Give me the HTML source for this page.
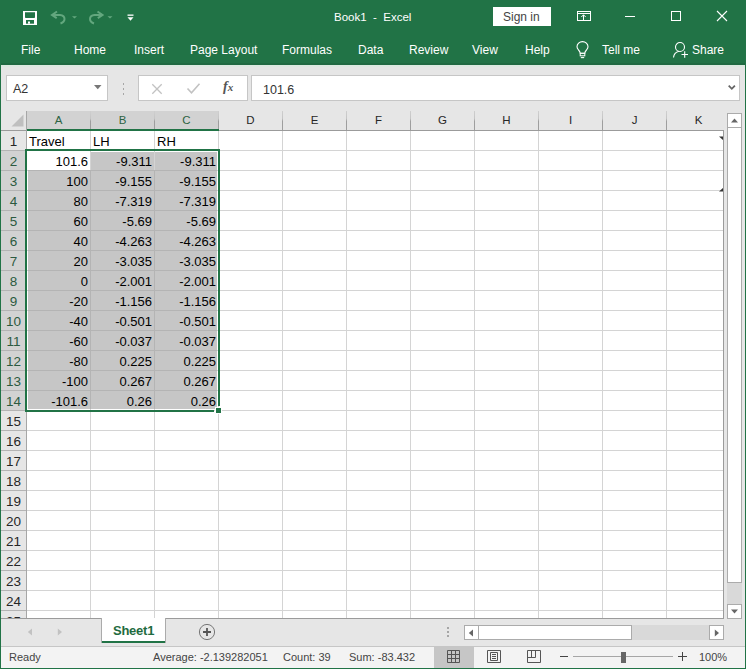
<!DOCTYPE html>
<html><head><meta charset="utf-8">
<style>
*{margin:0;padding:0;box-sizing:border-box}
html,body{width:746px;height:669px;overflow:hidden;background:#e6e6e6;font-family:"Liberation Sans",sans-serif}
.a{position:absolute}
.t{position:absolute;white-space:pre;line-height:1}
.tab{position:absolute;top:44px;color:#fff;font-size:12px;line-height:12px;white-space:pre}
.c{position:absolute;white-space:pre;font-size:13px;line-height:13px;color:#000}
.h{position:absolute;white-space:pre;font-size:12px;line-height:12px;text-align:center}
svg{position:absolute;overflow:visible}
</style></head><body>

<div class="a" style="left:0;top:0;width:746px;height:65px;background:#217346"></div>
<div class="a" style="left:0;top:63px;width:746px;height:2px;background:#1f6a41"></div>
<div class="a" style="left:1px;top:65px;width:744px;height:2px;background:#dbe9e0"></div>
<div class="a" style="left:1px;top:67px;width:744px;height:3px;background:#e3e6e4"></div>
<div class="t" style="left:334px;top:12px;font-size:11.5px;color:#fff">Book1  -  Excel</div>
<div class="a" style="left:493px;top:7px;width:58px;height:19px;background:#fff"></div>
<div class="t" style="left:503px;top:11px;font-size:12px;color:#444">Sign in</div>
<svg style="left:23px;top:11px" width="14" height="14" viewBox="0 0 14 14"><rect x="0" y="0" width="14" height="14" fill="#fff"/><path d="M2 1.3H12V6.2Q12 7 11.2 7H2.8Q2 7 2 6.2Z" fill="#217346"/><rect x="3" y="9" width="8" height="3.7" fill="#217346"/><rect x="5" y="10.5" width="2" height="2.2" fill="#fff"/></svg>
<svg style="left:50px;top:10px" width="28" height="15" viewBox="0 0 28 15"><path d="M7 1.5L2 5L6.7 8.2M2 5H10Q14.5 5.5 14.5 9Q14.5 12 10.5 13.5" fill="none" stroke="#63a77e" stroke-width="2"/><path d="M22 6.3H27L24.5 8.5Z" fill="#63a77e"/></svg>
<svg style="left:87px;top:10px" width="28" height="15" viewBox="0 0 28 15"><path d="M10.5 1.5L15.5 5L10.8 8.2M15.5 5H7.5Q3 5.5 3 9Q3 12 7 13.5" fill="none" stroke="#63a77e" stroke-width="2"/><path d="M20.5 6.3H25.5L23 8.5Z" fill="#63a77e"/></svg>
<svg style="left:127px;top:14px" width="7" height="8" viewBox="0 0 7 8"><rect x="0.5" y="0.5" width="6" height="1.3" fill="#fff"/><path d="M0.5 3.3H6.5L3.5 6.8Z" fill="#fff"/></svg>
<svg style="left:577px;top:11px" width="14" height="11" viewBox="0 0 14 11"><rect x="0.5" y="0.5" width="13" height="9" fill="none" stroke="#fff" stroke-width="1"/><path d="M1 2.5H13" stroke="#fff" stroke-width="1"/><path d="M6.5 9.5V3.8M4.3 6L6.5 3.8L8.7 6" fill="none" stroke="#fff" stroke-width="1"/></svg>
<div class="a" style="left:625px;top:16px;width:10px;height:1px;background:#fff"></div>
<div class="a" style="left:671px;top:11px;width:10px;height:10px;border:1px solid #fff"></div>
<svg style="left:717px;top:11px" width="10" height="10" viewBox="0 0 10 10"><path d="M0 0L10 10M10 0L0 10" stroke="#fff" stroke-width="1.1"/></svg>
<svg style="left:576px;top:42px" width="13" height="17" viewBox="0 0 13 17"><path d="M4.3 11.3Q4 9.5 2.5 8Q1 6.3 1 4.8A5.5 5.2 0 0 1 12 4.8Q12 6.3 10.5 8Q9 9.5 8.7 11.3Z" fill="none" stroke="#fff" stroke-width="1.1"/><rect x="4.2" y="11.3" width="4.6" height="2.5" fill="none" stroke="#fff" stroke-width="1"/><path d="M4.8 15.6H8.2" stroke="#fff" stroke-width="1.1"/></svg>
<svg style="left:672px;top:41px" width="18" height="18" viewBox="0 0 18 18"><circle cx="8" cy="6" r="4.5" fill="none" stroke="#fff" stroke-width="1.1"/><path d="M1.5 16.5Q2 11.5 7 10.3" fill="none" stroke="#fff" stroke-width="1.1"/><path d="M9.5 13.5H16M12.7 10.3V16.8" stroke="#fff" stroke-width="1.1"/></svg>
<div class="tab" style="left:21px">File</div>
<div class="tab" style="left:74px">Home</div>
<div class="tab" style="left:134px">Insert</div>
<div class="tab" style="left:190px">Page Layout</div>
<div class="tab" style="left:282px">Formulas</div>
<div class="tab" style="left:358px">Data</div>
<div class="tab" style="left:409px">Review</div>
<div class="tab" style="left:472px">View</div>
<div class="tab" style="left:525px">Help</div>
<div class="tab" style="left:602px">Tell me</div>
<div class="tab" style="left:692px">Share</div>
<div class="a" style="left:6px;top:75px;width:102px;height:26px;background:#fff;border:1px solid #c6c6c6"></div>
<div class="t" style="left:13px;top:83px;font-size:12.5px;color:#333">A2</div>
<div class="a" style="left:138px;top:75px;width:110px;height:26px;background:#fff;border:1px solid #c6c6c6"></div>
<div class="a" style="left:251px;top:75px;width:489px;height:26px;background:#fff;border:1px solid #c6c6c6"></div>
<div class="t" style="left:263px;top:84px;font-size:12.5px;color:#333">101.6</div>
<svg style="left:94px;top:85px" width="8" height="5" viewBox="0 0 8 5"><path d="M0 0H7.5L3.75 4.2Z" fill="#777"/></svg>
<div class="a" style="left:123px;top:83px;width:1px;height:2px;background:#a6a6a6"></div>
<div class="a" style="left:123px;top:88px;width:1px;height:2px;background:#a6a6a6"></div>
<div class="a" style="left:123px;top:93px;width:1px;height:2px;background:#a6a6a6"></div>
<svg style="left:152px;top:84px" width="10" height="10" viewBox="0 0 10 10"><path d="M0.3 0.3L9.7 9.7M9.7 0.3L0.3 9.7" stroke="#c2c2c2" stroke-width="1.3"/></svg>
<svg style="left:187px;top:83px" width="13" height="11" viewBox="0 0 13 11"><path d="M0.5 5.5L4.5 9.8L12.5 0.7" fill="none" stroke="#c2c2c2" stroke-width="1.6"/></svg>
<div class="t" style="left:223px;top:80px;font-family:'Liberation Serif',serif;font-style:italic;font-weight:bold;font-size:14px;color:#555">f<span style="font-size:11px">x</span></div>
<svg style="left:728px;top:85px" width="8" height="6" viewBox="0 0 8 6"><path d="M0.7 0.7L3.8 3.8L6.9 0.7" fill="none" stroke="#666" stroke-width="1.8"/></svg>
<div class="a" style="left:27px;top:131px;width:697px;height:487px;background:#fff"></div>
<div class="a" style="left:1px;top:111px;width:26px;height:20px;background:#e6e6e6"></div>
<div class="a" style="left:27px;top:111px;width:64px;height:19px;background:#d2d2d2"></div>
<div class="h" style="left:27px;top:115px;width:63px;font-size:11.5px;line-height:11.5px;color:#2c6343">A</div>
<div class="a" style="left:90px;top:111px;width:1px;height:19px;background:linear-gradient(#cfcfcf,#c4c4c4 40%,#9e9e9e 55%,#9e9e9e)"></div>
<div class="a" style="left:91px;top:111px;width:64px;height:19px;background:#d2d2d2"></div>
<div class="h" style="left:91px;top:115px;width:63px;font-size:11.5px;line-height:11.5px;color:#2c6343">B</div>
<div class="a" style="left:154px;top:111px;width:1px;height:19px;background:linear-gradient(#cfcfcf,#c4c4c4 40%,#9e9e9e 55%,#9e9e9e)"></div>
<div class="a" style="left:155px;top:111px;width:64px;height:19px;background:#d2d2d2"></div>
<div class="h" style="left:155px;top:115px;width:63px;font-size:11.5px;line-height:11.5px;color:#2c6343">C</div>
<div class="a" style="left:218px;top:111px;width:1px;height:19px;background:linear-gradient(#cfcfcf,#c4c4c4 40%,#9e9e9e 55%,#9e9e9e)"></div>
<div class="a" style="left:219px;top:111px;width:64px;height:19px;background:#e6e6e6"></div>
<div class="h" style="left:219px;top:115px;width:63px;font-size:11.5px;line-height:11.5px;color:#262626">D</div>
<div class="a" style="left:282px;top:111px;width:1px;height:19px;background:linear-gradient(#cfcfcf,#c4c4c4 40%,#9e9e9e 55%,#9e9e9e)"></div>
<div class="a" style="left:283px;top:111px;width:64px;height:19px;background:#e6e6e6"></div>
<div class="h" style="left:283px;top:115px;width:63px;font-size:11.5px;line-height:11.5px;color:#262626">E</div>
<div class="a" style="left:346px;top:111px;width:1px;height:19px;background:linear-gradient(#cfcfcf,#c4c4c4 40%,#9e9e9e 55%,#9e9e9e)"></div>
<div class="a" style="left:347px;top:111px;width:64px;height:19px;background:#e6e6e6"></div>
<div class="h" style="left:347px;top:115px;width:63px;font-size:11.5px;line-height:11.5px;color:#262626">F</div>
<div class="a" style="left:410px;top:111px;width:1px;height:19px;background:linear-gradient(#cfcfcf,#c4c4c4 40%,#9e9e9e 55%,#9e9e9e)"></div>
<div class="a" style="left:411px;top:111px;width:64px;height:19px;background:#e6e6e6"></div>
<div class="h" style="left:411px;top:115px;width:63px;font-size:11.5px;line-height:11.5px;color:#262626">G</div>
<div class="a" style="left:474px;top:111px;width:1px;height:19px;background:linear-gradient(#cfcfcf,#c4c4c4 40%,#9e9e9e 55%,#9e9e9e)"></div>
<div class="a" style="left:475px;top:111px;width:64px;height:19px;background:#e6e6e6"></div>
<div class="h" style="left:475px;top:115px;width:63px;font-size:11.5px;line-height:11.5px;color:#262626">H</div>
<div class="a" style="left:538px;top:111px;width:1px;height:19px;background:linear-gradient(#cfcfcf,#c4c4c4 40%,#9e9e9e 55%,#9e9e9e)"></div>
<div class="a" style="left:539px;top:111px;width:64px;height:19px;background:#e6e6e6"></div>
<div class="h" style="left:539px;top:115px;width:63px;font-size:11.5px;line-height:11.5px;color:#262626">I</div>
<div class="a" style="left:602px;top:111px;width:1px;height:19px;background:linear-gradient(#cfcfcf,#c4c4c4 40%,#9e9e9e 55%,#9e9e9e)"></div>
<div class="a" style="left:603px;top:111px;width:64px;height:19px;background:#e6e6e6"></div>
<div class="h" style="left:603px;top:115px;width:63px;font-size:11.5px;line-height:11.5px;color:#262626">J</div>
<div class="a" style="left:666px;top:111px;width:1px;height:19px;background:linear-gradient(#cfcfcf,#c4c4c4 40%,#9e9e9e 55%,#9e9e9e)"></div>
<div class="a" style="left:667px;top:111px;width:58px;height:19px;background:#e6e6e6"></div>
<div class="h" style="left:667px;top:115px;width:63px;font-size:11.5px;line-height:11.5px;color:#262626">K</div>
<div class="a" style="left:1px;top:130px;width:723px;height:1px;background:#9b9b9b"></div>
<div class="a" style="left:27px;top:129px;width:192px;height:2px;background:#217346"></div>
<div class="a" style="left:1px;top:131px;width:25px;height:19px;background:#e6e6e6"></div>
<div class="h" style="left:1px;top:135px;width:25px;font-size:13.5px;line-height:13.5px;color:#262626">1</div>
<div class="a" style="left:1px;top:150px;width:25px;height:1px;background:#b4b4b4"></div>
<div class="a" style="left:1px;top:151px;width:25px;height:19px;background:#d2d2d2"></div>
<div class="h" style="left:1px;top:155px;width:25px;font-size:13.5px;line-height:13.5px;color:#2c5a40">2</div>
<div class="a" style="left:1px;top:170px;width:25px;height:1px;background:#b4b4b4"></div>
<div class="a" style="left:1px;top:171px;width:25px;height:19px;background:#d2d2d2"></div>
<div class="h" style="left:1px;top:175px;width:25px;font-size:13.5px;line-height:13.5px;color:#2c5a40">3</div>
<div class="a" style="left:1px;top:190px;width:25px;height:1px;background:#b4b4b4"></div>
<div class="a" style="left:1px;top:191px;width:25px;height:19px;background:#d2d2d2"></div>
<div class="h" style="left:1px;top:195px;width:25px;font-size:13.5px;line-height:13.5px;color:#2c5a40">4</div>
<div class="a" style="left:1px;top:210px;width:25px;height:1px;background:#b4b4b4"></div>
<div class="a" style="left:1px;top:211px;width:25px;height:19px;background:#d2d2d2"></div>
<div class="h" style="left:1px;top:215px;width:25px;font-size:13.5px;line-height:13.5px;color:#2c5a40">5</div>
<div class="a" style="left:1px;top:230px;width:25px;height:1px;background:#b4b4b4"></div>
<div class="a" style="left:1px;top:231px;width:25px;height:19px;background:#d2d2d2"></div>
<div class="h" style="left:1px;top:235px;width:25px;font-size:13.5px;line-height:13.5px;color:#2c5a40">6</div>
<div class="a" style="left:1px;top:250px;width:25px;height:1px;background:#b4b4b4"></div>
<div class="a" style="left:1px;top:251px;width:25px;height:19px;background:#d2d2d2"></div>
<div class="h" style="left:1px;top:255px;width:25px;font-size:13.5px;line-height:13.5px;color:#2c5a40">7</div>
<div class="a" style="left:1px;top:270px;width:25px;height:1px;background:#b4b4b4"></div>
<div class="a" style="left:1px;top:271px;width:25px;height:19px;background:#d2d2d2"></div>
<div class="h" style="left:1px;top:275px;width:25px;font-size:13.5px;line-height:13.5px;color:#2c5a40">8</div>
<div class="a" style="left:1px;top:290px;width:25px;height:1px;background:#b4b4b4"></div>
<div class="a" style="left:1px;top:291px;width:25px;height:19px;background:#d2d2d2"></div>
<div class="h" style="left:1px;top:295px;width:25px;font-size:13.5px;line-height:13.5px;color:#2c5a40">9</div>
<div class="a" style="left:1px;top:310px;width:25px;height:1px;background:#b4b4b4"></div>
<div class="a" style="left:1px;top:311px;width:25px;height:19px;background:#d2d2d2"></div>
<div class="h" style="left:1px;top:315px;width:25px;font-size:13.5px;line-height:13.5px;color:#2c5a40">10</div>
<div class="a" style="left:1px;top:330px;width:25px;height:1px;background:#b4b4b4"></div>
<div class="a" style="left:1px;top:331px;width:25px;height:19px;background:#d2d2d2"></div>
<div class="h" style="left:1px;top:335px;width:25px;font-size:13.5px;line-height:13.5px;color:#2c5a40">11</div>
<div class="a" style="left:1px;top:350px;width:25px;height:1px;background:#b4b4b4"></div>
<div class="a" style="left:1px;top:351px;width:25px;height:19px;background:#d2d2d2"></div>
<div class="h" style="left:1px;top:355px;width:25px;font-size:13.5px;line-height:13.5px;color:#2c5a40">12</div>
<div class="a" style="left:1px;top:370px;width:25px;height:1px;background:#b4b4b4"></div>
<div class="a" style="left:1px;top:371px;width:25px;height:19px;background:#d2d2d2"></div>
<div class="h" style="left:1px;top:375px;width:25px;font-size:13.5px;line-height:13.5px;color:#2c5a40">13</div>
<div class="a" style="left:1px;top:390px;width:25px;height:1px;background:#b4b4b4"></div>
<div class="a" style="left:1px;top:391px;width:25px;height:19px;background:#d2d2d2"></div>
<div class="h" style="left:1px;top:395px;width:25px;font-size:13.5px;line-height:13.5px;color:#2c5a40">14</div>
<div class="a" style="left:1px;top:410px;width:25px;height:1px;background:#b4b4b4"></div>
<div class="a" style="left:1px;top:411px;width:25px;height:19px;background:#e6e6e6"></div>
<div class="h" style="left:1px;top:415px;width:25px;font-size:13.5px;line-height:13.5px;color:#262626">15</div>
<div class="a" style="left:1px;top:430px;width:25px;height:1px;background:#b4b4b4"></div>
<div class="a" style="left:1px;top:431px;width:25px;height:19px;background:#e6e6e6"></div>
<div class="h" style="left:1px;top:435px;width:25px;font-size:13.5px;line-height:13.5px;color:#262626">16</div>
<div class="a" style="left:1px;top:450px;width:25px;height:1px;background:#b4b4b4"></div>
<div class="a" style="left:1px;top:451px;width:25px;height:19px;background:#e6e6e6"></div>
<div class="h" style="left:1px;top:455px;width:25px;font-size:13.5px;line-height:13.5px;color:#262626">17</div>
<div class="a" style="left:1px;top:470px;width:25px;height:1px;background:#b4b4b4"></div>
<div class="a" style="left:1px;top:471px;width:25px;height:19px;background:#e6e6e6"></div>
<div class="h" style="left:1px;top:475px;width:25px;font-size:13.5px;line-height:13.5px;color:#262626">18</div>
<div class="a" style="left:1px;top:490px;width:25px;height:1px;background:#b4b4b4"></div>
<div class="a" style="left:1px;top:491px;width:25px;height:19px;background:#e6e6e6"></div>
<div class="h" style="left:1px;top:495px;width:25px;font-size:13.5px;line-height:13.5px;color:#262626">19</div>
<div class="a" style="left:1px;top:510px;width:25px;height:1px;background:#b4b4b4"></div>
<div class="a" style="left:1px;top:511px;width:25px;height:19px;background:#e6e6e6"></div>
<div class="h" style="left:1px;top:515px;width:25px;font-size:13.5px;line-height:13.5px;color:#262626">20</div>
<div class="a" style="left:1px;top:530px;width:25px;height:1px;background:#b4b4b4"></div>
<div class="a" style="left:1px;top:531px;width:25px;height:19px;background:#e6e6e6"></div>
<div class="h" style="left:1px;top:535px;width:25px;font-size:13.5px;line-height:13.5px;color:#262626">21</div>
<div class="a" style="left:1px;top:550px;width:25px;height:1px;background:#b4b4b4"></div>
<div class="a" style="left:1px;top:551px;width:25px;height:19px;background:#e6e6e6"></div>
<div class="h" style="left:1px;top:555px;width:25px;font-size:13.5px;line-height:13.5px;color:#262626">22</div>
<div class="a" style="left:1px;top:570px;width:25px;height:1px;background:#b4b4b4"></div>
<div class="a" style="left:1px;top:571px;width:25px;height:19px;background:#e6e6e6"></div>
<div class="h" style="left:1px;top:575px;width:25px;font-size:13.5px;line-height:13.5px;color:#262626">23</div>
<div class="a" style="left:1px;top:590px;width:25px;height:1px;background:#b4b4b4"></div>
<div class="a" style="left:1px;top:591px;width:25px;height:19px;background:#e6e6e6"></div>
<div class="h" style="left:1px;top:595px;width:25px;font-size:13.5px;line-height:13.5px;color:#262626">24</div>
<div class="a" style="left:1px;top:610px;width:25px;height:1px;background:#b4b4b4"></div>
<div class="a" style="left:1px;top:611px;width:25px;height:7px;background:#e6e6e6"></div>
<div class="a" style="left:1px;top:611px;width:25px;height:7px;overflow:hidden"><div class="h" style="left:0;top:4px;width:25px;font-size:13.5px;line-height:13.5px;color:#262626">25</div></div>
<div class="a" style="left:1px;top:630px;width:25px;height:1px;background:#b4b4b4"></div>
<div class="a" style="left:26px;top:111px;width:1px;height:507px;background:#a6a6a6"></div>
<div class="a" style="left:28px;top:152px;width:189px;height:257px;background:#c6c6c6"></div>
<div class="a" style="left:27px;top:151px;width:63px;height:19px;background:#fff"></div>
<div class="a" style="left:27px;top:150px;width:697px;height:1px;background:#d4d4d4"></div>
<div class="a" style="left:27px;top:170px;width:697px;height:1px;background:#d4d4d4"></div>
<div class="a" style="left:27px;top:190px;width:697px;height:1px;background:#d4d4d4"></div>
<div class="a" style="left:27px;top:210px;width:697px;height:1px;background:#d4d4d4"></div>
<div class="a" style="left:27px;top:230px;width:697px;height:1px;background:#d4d4d4"></div>
<div class="a" style="left:27px;top:250px;width:697px;height:1px;background:#d4d4d4"></div>
<div class="a" style="left:27px;top:270px;width:697px;height:1px;background:#d4d4d4"></div>
<div class="a" style="left:27px;top:290px;width:697px;height:1px;background:#d4d4d4"></div>
<div class="a" style="left:27px;top:310px;width:697px;height:1px;background:#d4d4d4"></div>
<div class="a" style="left:27px;top:330px;width:697px;height:1px;background:#d4d4d4"></div>
<div class="a" style="left:27px;top:350px;width:697px;height:1px;background:#d4d4d4"></div>
<div class="a" style="left:27px;top:370px;width:697px;height:1px;background:#d4d4d4"></div>
<div class="a" style="left:27px;top:390px;width:697px;height:1px;background:#d4d4d4"></div>
<div class="a" style="left:27px;top:410px;width:697px;height:1px;background:#d4d4d4"></div>
<div class="a" style="left:27px;top:430px;width:697px;height:1px;background:#d4d4d4"></div>
<div class="a" style="left:27px;top:450px;width:697px;height:1px;background:#d4d4d4"></div>
<div class="a" style="left:27px;top:470px;width:697px;height:1px;background:#d4d4d4"></div>
<div class="a" style="left:27px;top:490px;width:697px;height:1px;background:#d4d4d4"></div>
<div class="a" style="left:27px;top:510px;width:697px;height:1px;background:#d4d4d4"></div>
<div class="a" style="left:27px;top:530px;width:697px;height:1px;background:#d4d4d4"></div>
<div class="a" style="left:27px;top:550px;width:697px;height:1px;background:#d4d4d4"></div>
<div class="a" style="left:27px;top:570px;width:697px;height:1px;background:#d4d4d4"></div>
<div class="a" style="left:27px;top:590px;width:697px;height:1px;background:#d4d4d4"></div>
<div class="a" style="left:27px;top:610px;width:697px;height:1px;background:#d4d4d4"></div>
<div class="a" style="left:90px;top:131px;width:1px;height:487px;background:#d4d4d4"></div>
<div class="a" style="left:154px;top:131px;width:1px;height:487px;background:#d4d4d4"></div>
<div class="a" style="left:218px;top:131px;width:1px;height:487px;background:#d4d4d4"></div>
<div class="a" style="left:282px;top:131px;width:1px;height:487px;background:#d4d4d4"></div>
<div class="a" style="left:346px;top:131px;width:1px;height:487px;background:#d4d4d4"></div>
<div class="a" style="left:410px;top:131px;width:1px;height:487px;background:#d4d4d4"></div>
<div class="a" style="left:474px;top:131px;width:1px;height:487px;background:#d4d4d4"></div>
<div class="a" style="left:538px;top:131px;width:1px;height:487px;background:#d4d4d4"></div>
<div class="a" style="left:602px;top:131px;width:1px;height:487px;background:#d4d4d4"></div>
<div class="a" style="left:666px;top:131px;width:1px;height:487px;background:#d4d4d4"></div>
<div class="a" style="left:28px;top:170px;width:189px;height:1px;background:#b4b4b4"></div>
<div class="a" style="left:28px;top:190px;width:189px;height:1px;background:#b4b4b4"></div>
<div class="a" style="left:28px;top:210px;width:189px;height:1px;background:#b4b4b4"></div>
<div class="a" style="left:28px;top:230px;width:189px;height:1px;background:#b4b4b4"></div>
<div class="a" style="left:28px;top:250px;width:189px;height:1px;background:#b4b4b4"></div>
<div class="a" style="left:28px;top:270px;width:189px;height:1px;background:#b4b4b4"></div>
<div class="a" style="left:28px;top:290px;width:189px;height:1px;background:#b4b4b4"></div>
<div class="a" style="left:28px;top:310px;width:189px;height:1px;background:#b4b4b4"></div>
<div class="a" style="left:28px;top:330px;width:189px;height:1px;background:#b4b4b4"></div>
<div class="a" style="left:28px;top:350px;width:189px;height:1px;background:#b4b4b4"></div>
<div class="a" style="left:28px;top:370px;width:189px;height:1px;background:#b4b4b4"></div>
<div class="a" style="left:28px;top:390px;width:189px;height:1px;background:#b4b4b4"></div>
<div class="a" style="left:90px;top:170px;width:1px;height:239px;background:#b4b4b4"></div>
<div class="a" style="left:154px;top:170px;width:1px;height:239px;background:#b4b4b4"></div>
<div class="c" style="left:29px;top:135px">Travel</div>
<div class="c" style="left:93px;top:135px">LH</div>
<div class="c" style="left:157px;top:135px">RH</div>
<div class="c" style="left:26px;top:155px;width:62px;text-align:right">101.6</div>
<div class="c" style="left:90px;top:155px;width:62px;text-align:right">-9.311</div>
<div class="c" style="left:154px;top:155px;width:62px;text-align:right">-9.311</div>
<div class="c" style="left:26px;top:175px;width:62px;text-align:right">100</div>
<div class="c" style="left:90px;top:175px;width:62px;text-align:right">-9.155</div>
<div class="c" style="left:154px;top:175px;width:62px;text-align:right">-9.155</div>
<div class="c" style="left:26px;top:195px;width:62px;text-align:right">80</div>
<div class="c" style="left:90px;top:195px;width:62px;text-align:right">-7.319</div>
<div class="c" style="left:154px;top:195px;width:62px;text-align:right">-7.319</div>
<div class="c" style="left:26px;top:215px;width:62px;text-align:right">60</div>
<div class="c" style="left:90px;top:215px;width:62px;text-align:right">-5.69</div>
<div class="c" style="left:154px;top:215px;width:62px;text-align:right">-5.69</div>
<div class="c" style="left:26px;top:235px;width:62px;text-align:right">40</div>
<div class="c" style="left:90px;top:235px;width:62px;text-align:right">-4.263</div>
<div class="c" style="left:154px;top:235px;width:62px;text-align:right">-4.263</div>
<div class="c" style="left:26px;top:255px;width:62px;text-align:right">20</div>
<div class="c" style="left:90px;top:255px;width:62px;text-align:right">-3.035</div>
<div class="c" style="left:154px;top:255px;width:62px;text-align:right">-3.035</div>
<div class="c" style="left:26px;top:275px;width:62px;text-align:right">0</div>
<div class="c" style="left:90px;top:275px;width:62px;text-align:right">-2.001</div>
<div class="c" style="left:154px;top:275px;width:62px;text-align:right">-2.001</div>
<div class="c" style="left:26px;top:295px;width:62px;text-align:right">-20</div>
<div class="c" style="left:90px;top:295px;width:62px;text-align:right">-1.156</div>
<div class="c" style="left:154px;top:295px;width:62px;text-align:right">-1.156</div>
<div class="c" style="left:26px;top:315px;width:62px;text-align:right">-40</div>
<div class="c" style="left:90px;top:315px;width:62px;text-align:right">-0.501</div>
<div class="c" style="left:154px;top:315px;width:62px;text-align:right">-0.501</div>
<div class="c" style="left:26px;top:335px;width:62px;text-align:right">-60</div>
<div class="c" style="left:90px;top:335px;width:62px;text-align:right">-0.037</div>
<div class="c" style="left:154px;top:335px;width:62px;text-align:right">-0.037</div>
<div class="c" style="left:26px;top:355px;width:62px;text-align:right">-80</div>
<div class="c" style="left:90px;top:355px;width:62px;text-align:right">0.225</div>
<div class="c" style="left:154px;top:355px;width:62px;text-align:right">0.225</div>
<div class="c" style="left:26px;top:375px;width:62px;text-align:right">-100</div>
<div class="c" style="left:90px;top:375px;width:62px;text-align:right">0.267</div>
<div class="c" style="left:154px;top:375px;width:62px;text-align:right">0.267</div>
<div class="c" style="left:26px;top:395px;width:62px;text-align:right">-101.6</div>
<div class="c" style="left:90px;top:395px;width:62px;text-align:right">0.26</div>
<div class="c" style="left:154px;top:395px;width:62px;text-align:right">0.26</div>
<div class="a" style="left:25px;top:149px;width:195px;height:2px;background:#217346"></div>
<div class="a" style="left:25px;top:410px;width:189px;height:2px;background:#217346"></div>
<div class="a" style="left:25px;top:149px;width:2px;height:263px;background:#217346"></div>
<div class="a" style="left:218px;top:149px;width:2px;height:257px;background:#217346"></div>
<div class="a" style="left:215px;top:407px;width:7px;height:7px;background:#fff"></div>
<div class="a" style="left:216px;top:408px;width:5px;height:5px;background:#217346"></div>
<svg style="left:11px;top:114px" width="13" height="13" viewBox="0 0 13 13"><path d="M12.5 0.5V12.5H0.5Z" fill="#bfbfbf"/></svg>
<svg style="left:719px;top:136px" width="5" height="5" viewBox="0 0 5 5"><path d="M0 0.5H4.5V4.5Z" fill="#333"/></svg>
<svg style="left:719px;top:187px" width="5" height="5" viewBox="0 0 5 5"><path d="M4.5 0.5V4.5H0Z" fill="#333"/></svg>
<div class="a" style="left:1px;top:618px;width:723px;height:1px;background:#9b9b9b"></div>
<div class="a" style="left:723px;top:130px;width:1px;height:489px;background:#9b9b9b"></div>
<div class="a" style="left:727px;top:113px;width:15px;height:506px;background:#d9d9d9"></div>
<div class="a" style="left:727px;top:113px;width:15px;height:15px;background:#fff;border:1px solid #ababab"></div>
<div class="a" style="left:727px;top:127px;width:15px;height:456px;background:#fff;border:1px solid #ababab"></div>
<div class="a" style="left:727px;top:604px;width:15px;height:15px;background:#fff;border:1px solid #ababab"></div>
<svg style="left:731px;top:118px" width="8" height="5" viewBox="0 0 8 5"><path d="M0 4.5H7L3.5 0.5Z" fill="#666"/></svg>
<svg style="left:731px;top:609px" width="8" height="5" viewBox="0 0 8 5"><path d="M0 0.5H7L3.5 4.5Z" fill="#666"/></svg>
<div class="a" style="left:1px;top:619px;width:744px;height:27px;background:#e6e6e6"></div>
<div class="a" style="left:101px;top:618px;width:65px;height:25px;background:#fff;border-left:1px solid #ababab;border-right:1px solid #ababab"></div>
<div class="a" style="left:102px;top:641px;width:63px;height:2px;background:#217346"></div>
<div class="t" style="left:113px;top:624px;font-size:13px;letter-spacing:-0.25px;font-weight:bold;color:#1f6b40">Sheet1</div>
<div class="a" style="left:464px;top:625px;width:260px;height:15px;background:#d9d9d9"></div>
<div class="a" style="left:464px;top:625px;width:15px;height:15px;background:#fff;border:1px solid #ababab"></div>
<div class="a" style="left:478px;top:625px;width:154px;height:15px;background:#fff;border:1px solid #ababab"></div>
<div class="a" style="left:709px;top:625px;width:15px;height:15px;background:#fff;border:1px solid #ababab"></div>
<svg style="left:27px;top:628px" width="6" height="8" viewBox="0 0 6 8"><path d="M5 0.5V7.5L0.8 4Z" fill="#c2c2c2"/></svg>
<svg style="left:57px;top:628px" width="6" height="8" viewBox="0 0 6 8"><path d="M0.8 0.5V7.5L5 4Z" fill="#c2c2c2"/></svg>
<svg style="left:198px;top:623px" width="18" height="18" viewBox="0 0 18 18"><circle cx="9" cy="9" r="7.6" fill="none" stroke="#777" stroke-width="1"/><path d="M5 9H13M9 5V13" stroke="#555" stroke-width="1.8"/></svg>
<div class="a" style="left:447px;top:627px;width:2px;height:2px;background:#a6a6a6"></div>
<div class="a" style="left:447px;top:631px;width:2px;height:2px;background:#a6a6a6"></div>
<div class="a" style="left:447px;top:635px;width:2px;height:2px;background:#a6a6a6"></div>
<svg style="left:468px;top:629px" width="6" height="8" viewBox="0 0 6 8"><path d="M5 0.5V7.5L0.8 4Z" fill="#666"/></svg>
<svg style="left:714px;top:629px" width="6" height="8" viewBox="0 0 6 8"><path d="M0.8 0.5V7.5L5 4Z" fill="#666"/></svg>
<div class="a" style="left:1px;top:646px;width:744px;height:1px;background:#c6c6c6"></div>
<div class="a" style="left:1px;top:647px;width:744px;height:21px;background:#f3f3f3"></div>
<div class="t" style="left:9px;top:652px;font-size:11px;color:#444">Ready</div>
<div class="t" style="left:153px;top:652px;font-size:11px;color:#444">Average: -2.139282051</div>
<div class="t" style="left:283px;top:652px;font-size:11px;color:#444">Count: 39</div>
<div class="t" style="left:349px;top:652px;font-size:11px;color:#444">Sum: -83.432</div>
<div class="a" style="left:434px;top:647px;width:40px;height:21px;background:#c6c6c6"></div>
<div class="t" style="left:699px;top:652px;font-size:11px;color:#444">100%</div>
<svg style="left:447px;top:650px" width="13" height="13" viewBox="0 0 13 13"><path d="M0.5 0.5H12.5V12.5H0.5ZM4.5 0.5V12.5M8.5 0.5V12.5M0.5 4.5H12.5M0.5 8.5H12.5" fill="none" stroke="#555" stroke-width="1"/></svg>
<svg style="left:487px;top:650px" width="14" height="13" viewBox="0 0 14 13"><path d="M0.5 0.5H13.5V12.5H0.5Z" fill="none" stroke="#555" stroke-width="1"/><path d="M3.5 2.5H10.5V10.5H3.5Z" fill="none" stroke="#555" stroke-width="1"/><path d="M5 4.5H9M5 6.5H9M5 8.5H9" stroke="#555" stroke-width="1"/></svg>
<svg style="left:527px;top:650px" width="14" height="13" viewBox="0 0 14 13"><path d="M0.5 0.5H13.5V12.5H0.5Z" fill="none" stroke="#555" stroke-width="1"/><path d="M4.5 0.5V7.5M8.5 0.5V7.5H0.5" fill="none" stroke="#555" stroke-width="1"/></svg>
<div class="a" style="left:560px;top:656px;width:8px;height:1px;background:#444"></div>
<div class="a" style="left:573px;top:656px;width:100px;height:1px;background:#a6a6a6"></div>
<div class="a" style="left:621px;top:652px;width:5px;height:11px;background:#666"></div>
<div class="a" style="left:678px;top:656px;width:9px;height:1px;background:#444"></div>
<div class="a" style="left:682px;top:652px;width:1px;height:9px;background:#444"></div>
<div class="a" style="left:0;top:0;width:1px;height:669px;background:#217346"></div>
<div class="a" style="left:745px;top:0;width:1px;height:669px;background:#217346"></div>
<div class="a" style="left:0;top:668px;width:746px;height:1px;background:#217346"></div>
</body></html>
